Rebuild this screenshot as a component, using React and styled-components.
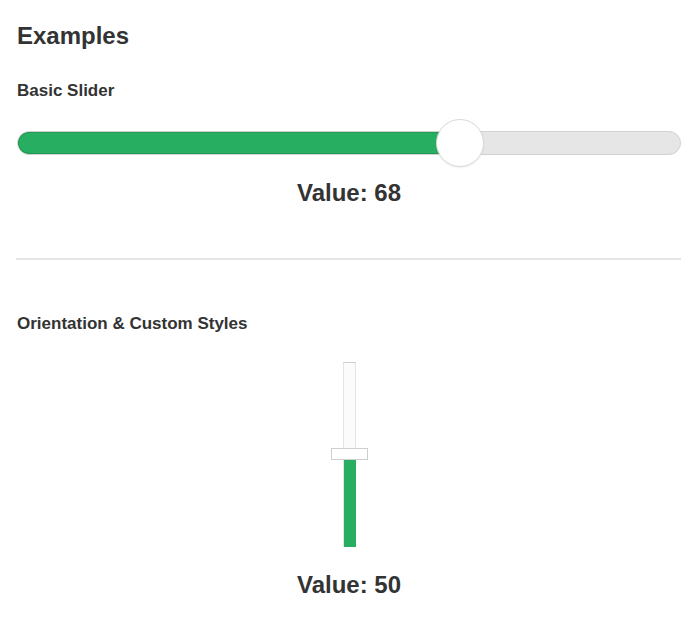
import React from "react";
import styled, { createGlobalStyle } from "styled-components";

const GlobalStyle = createGlobalStyle`
  body {
    margin: 0;
    background: #ffffff;
    font-family: "Liberation Sans", Arial, Helvetica, sans-serif;
    color: #333333;
  }
`;

const Page = styled.div`
  width: 664px;
  padding: 22px 19px 0 17px;
`;

const Title = styled.h2`
  margin: 0;
  font-size: 24px;
  line-height: 28.8px;
  font-weight: bold;
  color: #333;
`;

const Label = styled.h4`
  margin: ${(p) => p.$top}px 0 0;
  font-size: 17px;
  line-height: 20px;
  font-weight: bold;
  color: #333;
`;

const HSlider = styled.div`
  position: relative;
  height: 48px;
  margin-top: 18px;
  display: flex;
  align-items: center;
`;

const HTrack = styled.div`
  flex: 1;
  height: 24px;
  box-sizing: border-box;
  border-radius: 12px;
  background: #e6e6e6;
  border: 1px solid #d2d2d2;
  overflow: hidden;
  display: flex;
`;

const HFill = styled.div`
  height: 100%;
  background: #27ae60;
  box-shadow: inset 0 0 0 1px #229a53;
  border-radius: 12px 0 0 12px;
`;

const RoundHandle = styled.div`
  position: absolute;
  top: 0;
  width: 48px;
  height: 48px;
  box-sizing: border-box;
  border-radius: 50%;
  background: #fff;
  border: 1px solid #d9d9d9;
  box-shadow: 0 1px 2px rgba(0, 0, 0, 0.06);
`;

const Value = styled.div`
  margin-top: ${(p) => p.$top}px;
  text-align: center;
  font-size: 24px;
  line-height: 28px;
  font-weight: bold;
  color: #333;
`;

const Divider = styled.hr`
  margin: 51px 0 0 -1px;
  border: none;
  height: 2px;
  background: #e6e6e6;
`;

const VSlider = styled.div`
  position: relative;
  width: 37px;
  height: 185px;
  margin: 28px auto 0;
  display: flex;
  justify-content: center;
`;

const VTrack = styled.div`
  width: 13px;
  height: 100%;
  box-sizing: border-box;
  background: #fbfbfb;
  border: 1px solid #e4e4e4;
  border-top-color: #cfcfcf;
  display: flex;
  flex-direction: column;
  justify-content: flex-end;
`;

const VFill = styled.div`
  margin: 0 -1px -1px 0;
  background: #27ae60;
`;

const BarHandle = styled.div`
  position: absolute;
  left: 0;
  width: 37px;
  height: 12px;
  box-sizing: border-box;
  background: #fff;
  border: 1px solid #cfcfcf;
`;

const Horizontal = ({ value }) => (
  <HSlider>
    <HTrack>
      <HFill style={{ width: `calc(24px + ${value / 100} * (100% - 48px))` }} />
    </HTrack>
    <RoundHandle style={{ left: `calc(${value / 100} * (100% - 48px))` }} />
  </HSlider>
);

const Vertical = ({ value }) => (
  <VSlider>
    <VTrack>
      <VFill style={{ height: `${value}%` }} />
    </VTrack>
    <BarHandle style={{ bottom: `calc(${value}% - 6px)` }} />
  </VSlider>
);

const App = () => (
  <>
    <GlobalStyle />
    <Page>
      <Title>Examples</Title>
      <Label $top={30}>Basic Slider</Label>
      <Horizontal value={68} />
      <Value $top={12}>Value: 68</Value>
      <Divider />
      <Label $top={54}>Orientation &amp; Custom Styles</Label>
      <Vertical value={50} />
      <Value $top={24}>Value: 50</Value>
    </Page>
  </>
);

export default App;
